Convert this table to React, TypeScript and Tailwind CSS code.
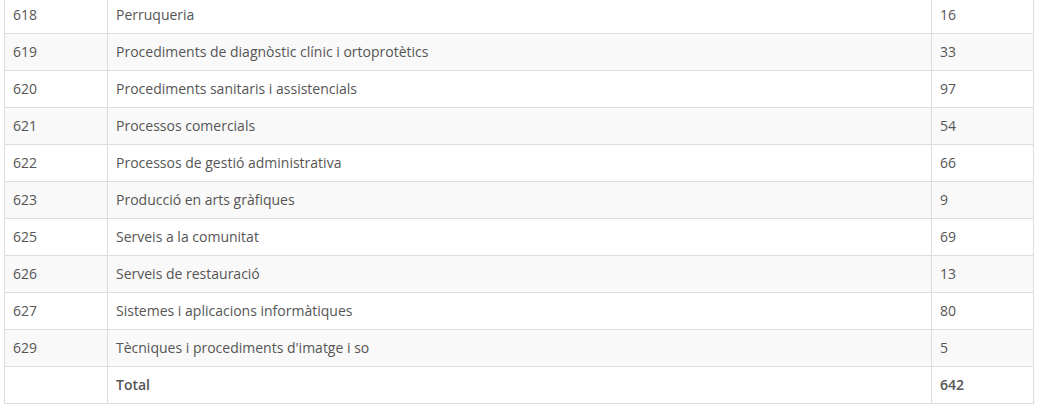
import React from "react";

const rows: [string, string, string][] = [
  ["618", "Perruqueria", "16"],
  ["619", "Procediments de diagnòstic clínic i ortoprotètics", "33"],
  ["620", "Procediments sanitaris i assistencials", "97"],
  ["621", "Processos comercials", "54"],
  ["622", "Processos de gestió administrativa", "66"],
  ["623", "Producció en arts gràfiques", "9"],
  ["625", "Serveis a la comunitat", "69"],
  ["626", "Serveis de restauració", "13"],
  ["627", "Sistemes i aplicacions informàtiques", "80"],
  ["629", "Tècniques i procediments d'imatge i so", "5"],
];

export default function App() {
  return (
    <div className="w-[1037px] h-[406px] overflow-hidden bg-white" style={{ fontFamily: '"Open Sans", sans-serif' }}>
      <table className="ml-[4px] -mt-[4px] w-[1029px] border-collapse border border-[#dddddd] text-[14px] leading-[20px] text-[#555555] table-fixed">
        <colgroup>
          <col className="w-[103px]" />
          <col className="w-[824px]" />
          <col className="w-[102px]" />
        </colgroup>
        <tbody>
          {rows.map((r, i) => (
            <tr key={r[0]} className={i % 2 === 1 ? "bg-[#f9f9f9]" : "bg-white"}>
              <td className="border border-[#dddddd] p-[8px] align-top">{r[0]}</td>
              <td className="border border-[#dddddd] p-[8px] align-top">{r[1]}</td>
              <td className="border border-[#dddddd] p-[8px] align-top">{r[2]}</td>
            </tr>
          ))}
          <tr className="bg-white">
            <td className="border border-[#dddddd] p-[8px]"></td>
            <td className="border border-[#dddddd] p-[8px] font-semibold">Total</td>
            <td className="border border-[#dddddd] p-[8px] font-semibold">642</td>
          </tr>
        </tbody>
      </table>
    </div>
  );
}
